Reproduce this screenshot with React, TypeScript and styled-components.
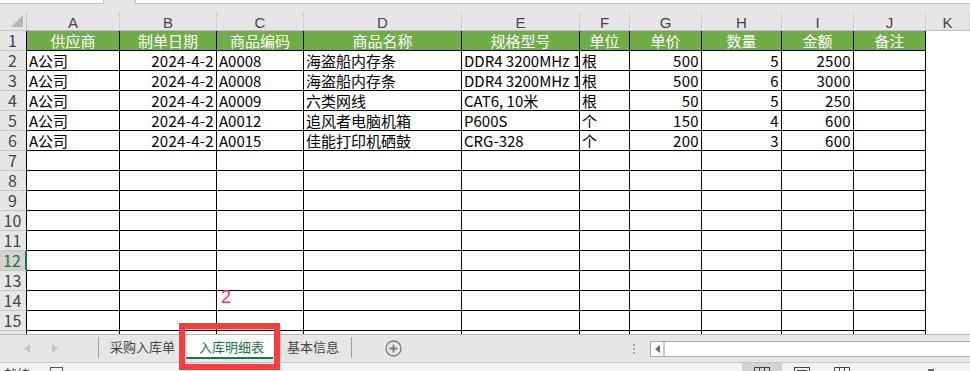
import styled, { createGlobalStyle } from 'styled-components';

const GlobalStyle = createGlobalStyle`
  html, body {
    margin: 0;
    padding: 0;
    background: #ffffff;
  }
  * {
    box-sizing: border-box;
  }
`;

const COLS = [27, 93, 97, 87, 158, 118, 50, 72, 80, 72, 72];
const LETTERS = ['A', 'B', 'C', 'D', 'E', 'F', 'G', 'H', 'I', 'J', 'K'];
const HEADERS = ['供应商', '制单日期', '商品编码', '商品名称', '规格型号', '单位', '单价', '数量', '金额', '备注'];
const RIGHT = [false, true, false, false, false, false, true, true, true, false];

const DATA = [
  ['A公司', '2024-4-2', 'A0008', '海盗船内存条', 'DDR4 3200MHz 16G', '根', '500', '5', '2500', ''],
  ['A公司', '2024-4-2', 'A0008', '海盗船内存条', 'DDR4 3200MHz 16G', '根', '500', '6', '3000', ''],
  ['A公司', '2024-4-2', 'A0009', '六类网线', 'CAT6, 10米', '根', '50', '5', '250', ''],
  ['A公司', '2024-4-2', 'A0012', '追风者电脑机箱', 'P600S', '个', '150', '4', '600', ''],
  ['A公司', '2024-4-2', 'A0015', '佳能打印机硒鼓', 'CRG-328', '个', '200', '3', '600', ''],
];

const TOTAL_ROWS = 16;
const SELECTED_ROW = 12;

export default function App() {
  const rows: string[][] = [];
  for (let r = 2; r <= TOTAL_ROWS; r++) {
    rows.push(DATA[r - 2] || Array(10).fill(''));
  }

  return (
    <Page>
      <GlobalStyle />
      <FormulaStrip>
        <NameBox />
        <StripGap />
        <FormulaBox />
      </FormulaStrip>
      <GapBand />

      <Sheet>
        <Grid>
          <Corner>
            <svg width="12" height="12" viewBox="0 0 12 12">
              <polygon points="12,0 12,12 0,12" fill="#b5b5b5" />
            </svg>
          </Corner>
          {LETTERS.map((l) => (
            <ColHead key={l}>{l}</ColHead>
          ))}

          <RowHead>1</RowHead>
          {HEADERS.map((h) => (
            <HeadCell key={h}>{h}</HeadCell>
          ))}
          <BlankCell />

          {rows.map((row, i) => {
            const n = i + 2;
            return [
              <RowHead key={`h${n}`} $selected={n === SELECTED_ROW}>{n}</RowHead>,
              ...row.map((v, c) => (
                <Cell key={`${n}-${c}`} $right={RIGHT[c]}>
                  {v}
                </Cell>
              )),
              <BlankCell key={`k${n}`} />,
            ];
          })}
        </Grid>
      </Sheet>

      <TabBar>
        <NavArrows>
          <svg width="6" height="9" viewBox="0 0 6 9">
            <polygon points="6,0 6,9 0,4.5" fill="#c4c4c4" />
          </svg>
          <svg width="6" height="9" viewBox="0 0 6 9">
            <polygon points="0,0 0,9 6,4.5" fill="#c4c4c4" />
          </svg>
        </NavArrows>
        <TabSep />
        <Tab>采购入库单</Tab>
        <Tab $active>入库明细表</Tab>
        <Tab $last>基本信息</Tab>
        <TabSep />
        <AddButton>
          <svg width="17" height="17" viewBox="0 0 17 17">
            <circle cx="8.5" cy="8.5" r="7.5" fill="none" stroke="#7a7a7a" strokeWidth="1.3" />
            <path d="M8.5 4.5v8M4.5 8.5h8" stroke="#7a7a7a" strokeWidth="1.8" />
          </svg>
        </AddButton>
        <Spacer />
        <Dots>
          <span />
          <span />
          <span />
        </Dots>
        <HScroll>
          <ScrollButton>
            <svg width="5" height="8" viewBox="0 0 5 8">
              <polygon points="5,0 5,8 0,4" fill="#6d6d6d" />
            </svg>
          </ScrollButton>
          <ScrollTrack />
        </HScroll>
      </TabBar>

      <StatusBar>
        <StatusText>就绪</StatusText>
        <StatusIcon>
          <svg width="13" height="13" viewBox="0 0 13 13">
            <rect x="0.5" y="0.5" width="12" height="12" fill="none" stroke="#555" />
            <path d="M0.5 4.5h12" stroke="#555" />
          </svg>
        </StatusIcon>
        <Spacer />
        <ViewButtons>
          <ViewButton $active>
            <svg width="16" height="12" viewBox="0 0 16 12">
              <rect x="0.5" y="0.5" width="15" height="11" fill="none" stroke="#444" />
              <path d="M5.5 0.5v11M10.5 0.5v11M0.5 4.5h15" stroke="#444" />
            </svg>
          </ViewButton>
          <ViewButton>
            <svg width="16" height="12" viewBox="0 0 16 12">
              <rect x="0.5" y="0.5" width="15" height="11" fill="none" stroke="#444" />
              <rect x="3.5" y="3.5" width="9" height="8" fill="none" stroke="#444" />
            </svg>
          </ViewButton>
          <ViewButton>
            <svg width="16" height="12" viewBox="0 0 16 12">
              <path d="M0.5 11.5v-11h15v11M5.5 0.5v11M10.5 0.5v11" fill="none" stroke="#444" />
            </svg>
          </ViewButton>
        </ViewButtons>
        <ZoomMark />
      </StatusBar>

      <Annotation>2</Annotation>
      <Highlight />
    </Page>
  );
}

const Page = styled.div`
  position: relative;
  width: 970px;
  height: 371px;
  overflow: hidden;
  display: flex;
  flex-direction: column;
  font-family: "Noto Sans CJK SC", "Liberation Sans", sans-serif;
  background: #ffffff;
`;

const FormulaStrip = styled.div`
  height: 4px;
  flex: none;
  display: flex;
  background: #e6e6e6;
`;

const NameBox = styled.div`
  width: 104px;
  background: #ffffff;
  border-bottom: 1px solid #c6c6c6;
  border-right: 1px solid #c6c6c6;
`;

const StripGap = styled.div`
  width: 31px;
`;

const FormulaBox = styled.div`
  flex: 1;
  background: #ffffff;
  border-bottom: 1px solid #c6c6c6;
  border-left: 1px solid #c6c6c6;
`;

const GapBand = styled.div`
  height: 8px;
  flex: none;
  background: #e6e6e6;
`;

const Sheet = styled.div`
  height: 322px;
  flex: none;
  overflow: hidden;
`;

const Grid = styled.div`
  display: grid;
  grid-template-columns: ${COLS.map((c) => `${c}px`).join(' ')} 1fr;
  grid-template-rows: 19px repeat(${TOTAL_ROWS}, 20px);
`;

const Corner = styled.div`
  background: #e6e6e6;
  border-right: 1px solid #c6c6c6;
  border-bottom: 1px solid #c6c6c6;
  display: flex;
  align-items: flex-end;
  justify-content: flex-end;
  padding: 0 3px 3px 0;
`;

const ColHead = styled.div`
  background: #e6e6e6;
  border-right: 1px solid #d0d0d0;
  border-bottom: 1px solid #bdbdbd;
  color: #444444;
  font-family: "Liberation Sans", sans-serif;
  font-size: 15px;
  line-height: 19px;
  padding-top: 1px;
  text-align: center;
  &:last-child {
    border-right: none;
  }
`;

const RowHead = styled.div<{ $selected?: boolean }>`
  background: ${(p) => (p.$selected ? '#d2d2d2' : '#e6e6e6')};
  color: ${(p) => (p.$selected ? '#217346' : '#444444')};
  border-bottom: 1px solid #c6c6c6;
  border-right: ${(p) => (p.$selected ? '2px solid #217346' : '1px solid #000000')};
  font-size: 16px;
  line-height: 19px;
  text-align: center;
  padding-right: 1px;
`;

const Cell = styled.div<{ $right?: boolean }>`
  border-right: 1px solid #000000;
  border-bottom: 1px solid #000000;
  color: #000000;
  font-size: 15px;
  line-height: 19px;
  padding: 0 2px 0 2px;
  text-align: ${(p) => (p.$right ? 'right' : 'left')};
  letter-spacing: ${(p) => (p.$right ? '0.3px' : '0')};
  white-space: nowrap;
  overflow: hidden;
`;

const HeadCell = styled(Cell)`
  background: #70ad47;
  color: #ffffff;
  text-align: center;
  letter-spacing: 0;
`;

const BlankCell = styled.div`
  background: #ffffff;
`;

const TabBar = styled.div`
  height: 29px;
  flex: none;
  display: flex;
  align-items: stretch;
  background: #e6e6e6;
  border-top: 1px solid #b9b9b9;
  border-bottom: 1px solid #c6c6c6;
`;

const NavArrows = styled.div`
  width: 98px;
  display: flex;
  align-items: center;
  gap: 22px;
  padding-left: 24px;
`;

const TabSep = styled.div`
  width: 1px;
  margin: 2px 0 4px;
  background: #9a9a9a;
`;

const Tab = styled.div<{ $active?: boolean; $last?: boolean }>`
  display: flex;
  align-items: center;
  padding: ${(p) => (p.$active ? '0 9px 0 13px' : p.$last ? '0 12px 0 14px' : '0 11px')};
  margin-bottom: 3px;
  font-size: 13px;
  color: ${(p) => (p.$active ? '#217346' : '#444444')};
  background: ${(p) => (p.$active ? '#ffffff' : 'transparent')};
  border-bottom: ${(p) => (p.$active ? '2px solid #217346' : '2px solid transparent')};
`;

const AddButton = styled.div`
  width: 82px;
  display: flex;
  align-items: center;
  justify-content: center;
  padding-bottom: 1px;
`;

const Spacer = styled.div`
  flex: 1;
`;

const Dots = styled.div`
  width: 16px;
  margin-right: 8px;
  display: flex;
  flex-direction: column;
  justify-content: center;
  align-items: center;
  gap: 2px;
  span {
    width: 2px;
    height: 2px;
    background: #a5a5a5;
  }
`;

const HScroll = styled.div`
  width: 320px;
  margin: 6px 0 5px;
  display: flex;
  background: #ffffff;
  border: 1px solid #ababab;
  border-right: none;
`;

const ScrollButton = styled.div`
  width: 14px;
  display: flex;
  align-items: center;
  justify-content: center;
  border-right: 2px solid #c8c8c8;
`;

const ScrollTrack = styled.div`
  flex: 1;
`;

const StatusBar = styled.div`
  height: 28px;
  flex: none;
  display: flex;
  align-items: flex-start;
  background: #f3f3f3;
`;

const StatusText = styled.div`
  padding: 2px 0 0 4px;
  font-size: 13px;
  line-height: 18px;
  color: #444444;
`;

const StatusIcon = styled.div`
  padding: 4px 0 0 20px;
  display: flex;
`;

const ViewButtons = styled.div`
  display: flex;
`;

const ViewButton = styled.div<{ $active?: boolean }>`
  width: 40px;
  height: 24px;
  display: flex;
  justify-content: center;
  padding-top: 4px;
  background: ${(p) => (p.$active ? '#d3d3d3' : 'transparent')};
`;

const ZoomMark = styled.div`
  width: 6px;
  height: 10px;
  margin: 6px 36px 0 66px;
  background: #6a6a6a;
`;

const Annotation = styled.div`
  position: absolute;
  left: 221px;
  top: 287px;
  font-family: "Liberation Sans", sans-serif;
  font-size: 18px;
  color: #ff3b3b;
`;

const Highlight = styled.div`
  position: absolute;
  left: 179px;
  top: 323px;
  width: 101px;
  height: 47px;
  border: 6px solid #ff3a3a;
`;
